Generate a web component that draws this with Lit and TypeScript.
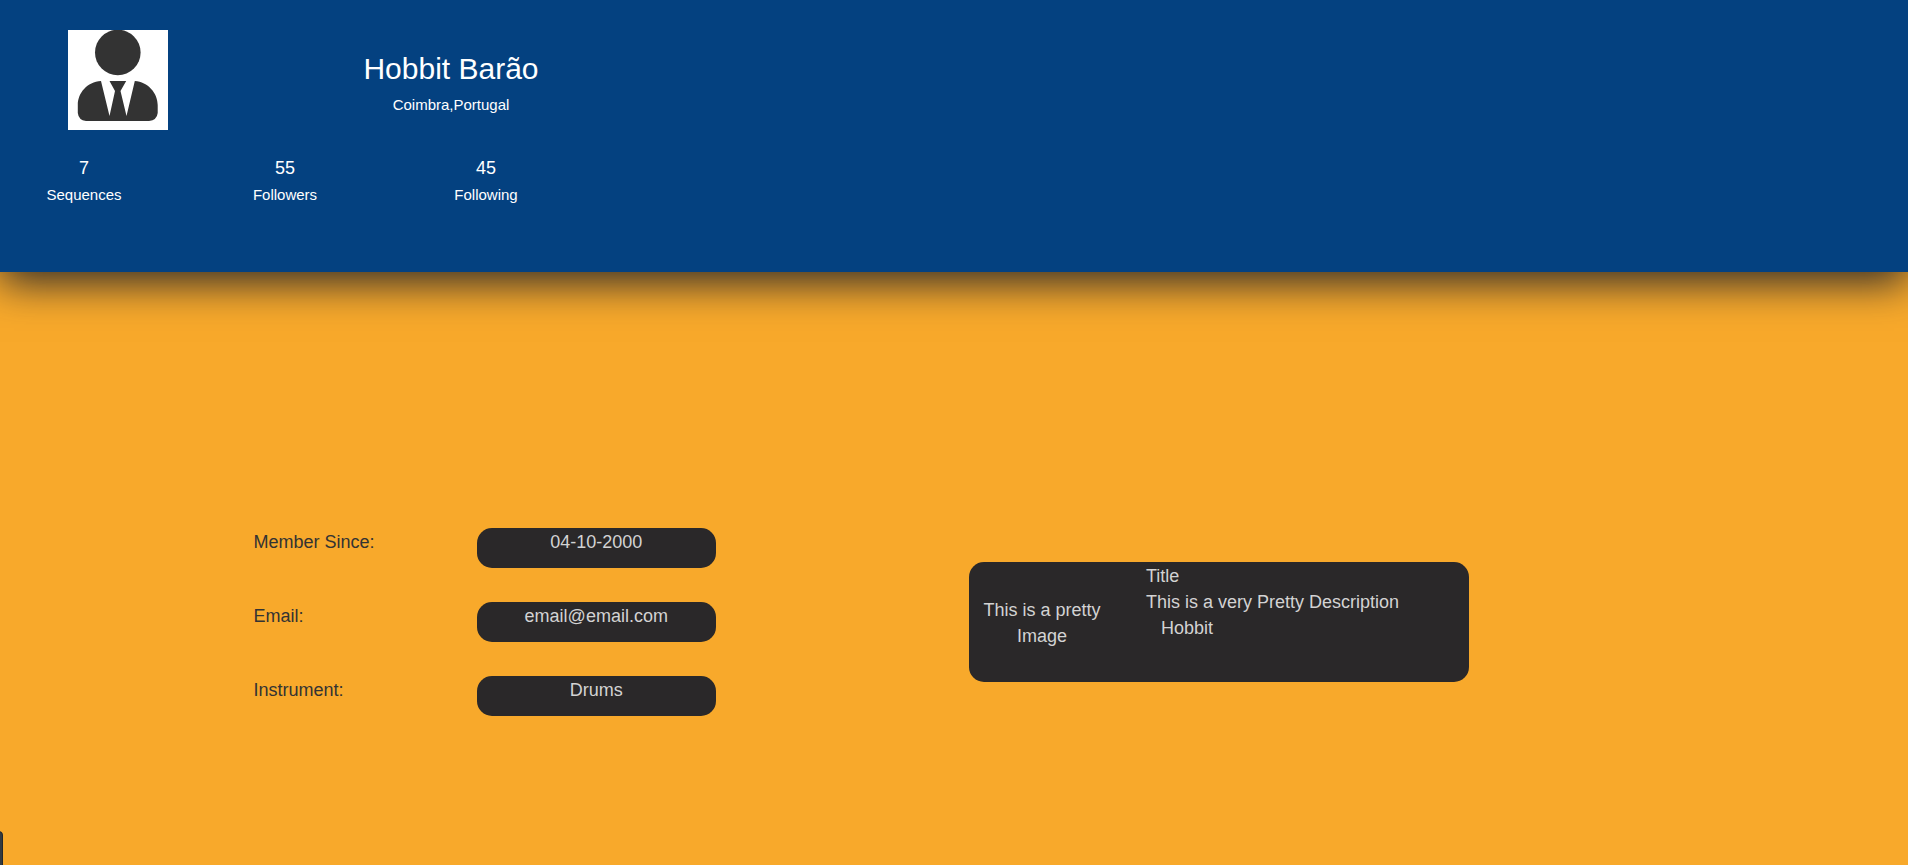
import { LitElement, html, css } from "lit";
import { customElement, property } from "lit/decorators.js";

@customElement("profile-header")
class ProfileHeader extends LitElement {
  @property() name = "";
  @property() place = "";
  @property({ attribute: false }) stats: { value: number; label: string }[] = [];

  static styles = css`
    :host {
      display: block;
      position: relative;
      padding: 30px 0 64px;
      background: #044180;
      color: #fff;
      box-shadow: 0 10px 40px 0 #2a2829;
    }
    .identity {
      display: flex;
      max-width: 570px;
      padding-left: 68px;
      box-sizing: border-box;
      gap: 164px;
    }
    .avatar {
      flex: none;
      width: 100px;
      height: 100px;
      background: #fff;
    }
    .who {
      flex: 1;
      padding-top: 20px;
      text-align: center;
      white-space: nowrap;
    }
    h1 {
      margin: 0;
      font-size: 30px;
      line-height: 38px;
      font-weight: 400;
    }
    .place,
    .label {
      margin: 0;
      font-size: 15px;
      line-height: 26px;
    }
    .place {
      padding-top: 4px;
    }
    .stats {
      display: grid;
      grid-template-columns: repeat(3, 168px);
      gap: 33px;
      margin: 0;
      padding-top: 25px;
      text-align: center;
    }
    .stat {
      display: flex;
      flex-direction: column-reverse;
      gap: 1px;
    }
    .value {
      margin: 0;
      font-size: 18px;
      line-height: 26px;
    }
  `;

  render() {
    return html`
      <div class="identity">
        <svg class="avatar" viewBox="0 0 100 100" role="img" aria-label="Avatar">
          <g fill="#333">
            <circle cx="49.8" cy="22.5" r="22.8" />
            <path d="M33 51C19 52 9.800 63 9.800 75V83Q10.500 90 18 91H81Q89 90 89.700 83V75C89.700 63 80 52 66.800 51L58.500 86L52.500 61L58.200 51H41.500L47 61L41.500 86Z" />
          </g>
        </svg>
        <div class="who">
          <h1>${this.name}</h1>
          <p class="place">${this.place}</p>
        </div>
      </div>
      <dl class="stats">
        ${this.stats.map(
          (s) => html`<div class="stat">
            <dt class="label">${s.label}</dt>
            <dd class="value">${s.value}</dd>
          </div>`
        )}
      </dl>
    `;
  }
}

@customElement("sequence-card")
class SequenceCard extends LitElement {
  static styles = css`
    :host {
      display: grid;
      grid-template-columns: 122px 1fr;
      column-gap: 28px;
      box-sizing: border-box;
      max-width: 500px;
      height: 120px;
      padding: 1px 12px 0;
      border-radius: 15px;
      background: #2a2829;
      color: #d3d3d3;
    }
    .image {
      align-self: center;
      text-align: center;
    }
    .title,
    .text,
    .author {
      margin: 0;
      font-size: inherit;
      font-weight: 400;
    }
    .info {
      padding-left: 15px;
    }
    .author {
      padding-left: 15px;
    }
  `;

  render() {
    return html`
      <div class="image">This is a pretty Image</div>
      <div class="info">
        <h2 class="title">Title</h2>
        <p class="text">This is a very Pretty Description</p>
        <p class="author">Hobbit</p>
      </div>
    `;
  }
}

@customElement("app-root")
class AppRoot extends LitElement {
  private stats = [
    { value: 7, label: "Sequences" },
    { value: 55, label: "Followers" },
    { value: 45, label: "Following" },
  ];

  private facts = [
    ["Member Since:", "04-10-2000"],
    ["Email:", "email@email.com"],
    ["Instrument:", "Drums"],
  ];

  static styles = css`
    :host {
      display: block;
      position: relative;
      min-height: 100vh;
      overflow: hidden;
      background: #f8a92b;
      color: #333;
      font: 18px/26px "Liberation Sans", Arial, sans-serif;
    }
    .content {
      display: grid;
      grid-template-columns: 1fr 1fr;
      align-items: center;
      padding-top: 256px;
    }
    .facts {
      display: grid;
      gap: 34px;
      margin: 0;
    }
    .fact {
      display: grid;
      grid-template-columns: repeat(4, 1fr);
    }
    .key,
    .pill {
      box-sizing: border-box;
      height: 40px;
      padding-top: 1px;
    }
    .key {
      grid-column: 2;
      padding-left: 15px;
    }
    .pill {
      margin: 0;
      border-radius: 15px;
      background: #2a2829;
      color: #d3d3d3;
      text-align: center;
    }
    .side {
      padding-left: 15px;
    }
    .drawer {
      position: absolute;
      left: -37px;
      bottom: -4px;
      width: 40px;
      height: 38px;
      border: 1px solid #23272b;
      border-radius: 4px;
      background: #343a40;
    }
  `;

  render() {
    return html`
      <profile-header name="Hobbit Barão" place="Coimbra,Portugal" .stats=${this.stats}></profile-header>
      <main class="content">
        <dl class="facts">
          ${this.facts.map(
            ([key, value]) => html`<div class="fact">
              <dt class="key">${key}</dt>
              <dd class="pill">${value}</dd>
            </div>`
          )}
        </dl>
        <div class="side"><sequence-card></sequence-card></div>
      </main>
      <button class="drawer" type="button" aria-label="Menu"></button>
    `;
  }
}
